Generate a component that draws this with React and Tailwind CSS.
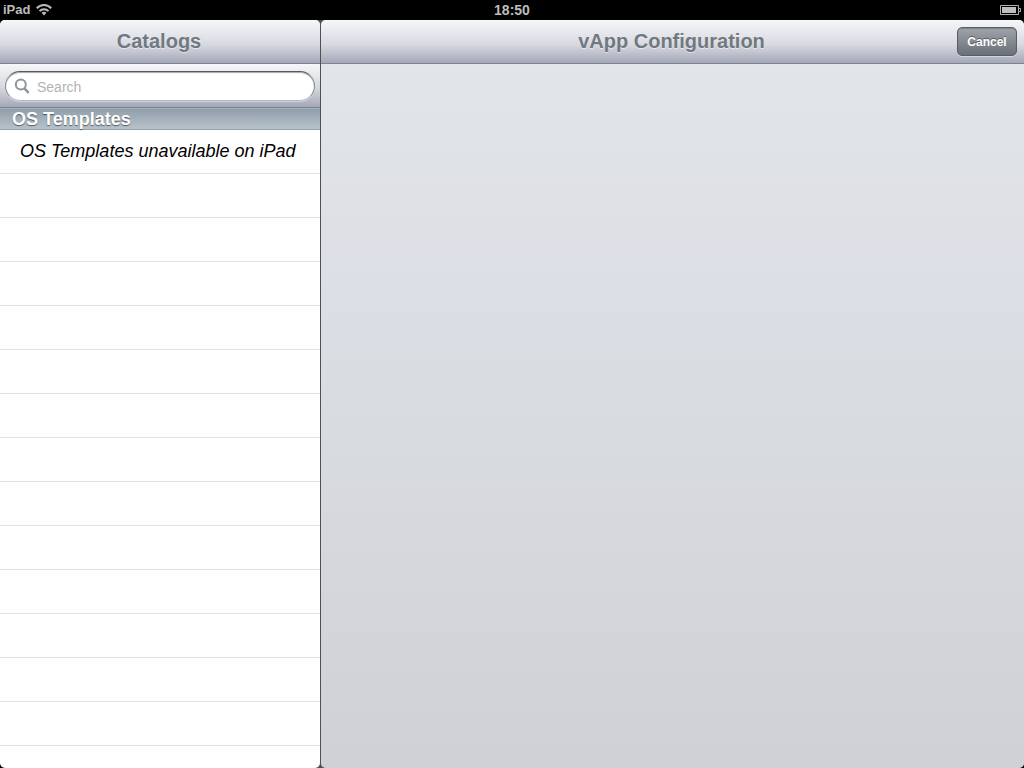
const emptyRows = Array.from({ length: 14 }, (_, index) => index);

function WifiIcon() {
  return (
    <svg viewBox="0 0 16 12" className="h-3 w-4" role="img" aria-label="Wi-Fi connected">
      <g fill="none" stroke="#bdbdbd" strokeWidth="2">
        <path d="M.8 4.3C4.8 0 11.2 0 15.2 4.3" />
        <path d="M3.5 7.1C6 4.5 10 4.5 12.5 7.1" />
      </g>
      <path d="M5.6 8.8C7 7.4 9 7.4 10.4 8.8L8 11.4Z" fill="#bdbdbd" />
    </svg>
  );
}

function BatteryIcon() {
  return (
    <svg viewBox="0 0 21 10" className="h-[10px] w-[21px]" role="img" aria-label="Battery charged">
      <path d="M.5 .5H18.5V3.5H20.5V6.5H18.5V9.5H.5Z" fill="#000" stroke="#b4b4b4" />
      <path d="M18.5 3.5V6.5" stroke="#b4b4b4" />
      <rect x="2" y="2" width="14" height="6" fill="#c0bec2" />
    </svg>
  );
}

function SearchIcon() {
  return (
    <svg viewBox="0 0 16 16" className="size-4 shrink-0" aria-hidden="true">
      <circle cx="6.8" cy="6.6" r="5" fill="none" stroke="#8a969f" strokeWidth="2" />
      <path d="M10.2 10.2L14.6 14.8" stroke="#8a969f" strokeWidth="2.4" />
    </svg>
  );
}

function TitleBar({ title, children }) {
  return (
    <header className="relative flex h-11 shrink-0 items-center justify-center border-b border-[#7e8295] bg-linear-to-b from-[#f6f7f9] via-[#dadbe2] via-55% to-[#a5a8b8] pr-0.5 pb-0.5">
      <h1 className="text-xl font-bold text-[#717980] [text-shadow:0_1px_0_rgba(255,255,255,0.5)]">{title}</h1>
      {children}
    </header>
  );
}

export default function App() {
  return (
    <div className="flex h-screen flex-col overflow-hidden bg-black font-['Liberation_Sans',Arial,sans-serif]">
      <div className="grid h-5 shrink-0 grid-cols-3 items-center px-[3px] pb-0.5 text-sm leading-5 font-bold text-[#bdbdbd]">
        <div className="flex items-center gap-1.5">
          <span className="text-[13px] leading-5">iPad</span>
          <WifiIcon />
        </div>
        <time className="text-center">18:50</time>
        <div className="flex justify-end">
          <BatteryIcon />
        </div>
      </div>

      <main className="flex min-h-0 flex-1">
        <div className="flex w-80 shrink-0 bg-linear-to-r from-black from-50% to-[#505050] to-50%">
          <section className="flex min-w-0 flex-1 flex-col overflow-hidden rounded-[5px] bg-white">
            <TitleBar title="Catalogs" />
            <div className="h-11 shrink-0 border-b border-[#7e8295] bg-linear-to-b from-[#f6f7f9] via-[#d6d8df] via-55% to-[#a5a8b8] px-[5px] pt-[7px]">
              <label className="flex h-[30px] items-center gap-[7px] rounded-full border border-t-[#55585c] border-r-[#85888e] border-b-[#b4b6bc] border-l-[#85888e] bg-white pr-3 pl-2 shadow-[inset_0_1px_1px_rgba(0,0,0,0.35),0_1px_0_rgba(255,255,255,0.4)]">
                <SearchIcon />
                <input
                  type="search"
                  aria-label="Search"
                  placeholder="Search"
                  className="min-w-0 flex-1 bg-transparent pt-0.5 text-sm text-black outline-none placeholder:text-[#b3b3b3]"
                />
              </label>
            </div>
            <h2 className="h-[22px] shrink-0 border-t border-b border-t-[#a3b0ba] border-b-[#98a2ab] bg-linear-to-b from-[#909fab] to-[#b8c2ca] px-3 text-lg leading-5 font-bold text-white [text-shadow:0_1px_1px_rgba(0,0,0,0.5)]">
              OS Templates
            </h2>
            <ul className="min-h-0 flex-1 overflow-hidden">
              <li className="flex h-11 items-center border-b border-[#e0e0e0] px-5 pb-0.5 text-lg text-black italic">
                OS Templates unavailable on iPad
              </li>
              {emptyRows.map((row) => (
                <li key={row} aria-hidden="true" className="h-11 border-b border-[#e0e0e0]" />
              ))}
            </ul>
          </section>
        </div>

        <div className="w-px shrink-0 bg-[#505050]" />

        <div className="flex min-w-0 flex-1 bg-linear-to-r from-[#505050] from-50% to-black to-50%">
          <section className="flex min-w-0 flex-1 flex-col overflow-hidden rounded-[5px] bg-[#d0d1d6]">
            <TitleBar title="vApp Configuration">
              <button
                type="button"
                className="absolute top-[7px] right-[7px] h-[29px] w-[60px] rounded-[5px] border border-[#5a5e66] bg-linear-to-b from-[#a0a4aa] to-[#6a7078] text-xs font-bold text-white shadow-[inset_0_1px_1px_rgba(0,0,0,0.2),0_1px_0_rgba(255,255,255,0.4)] [text-shadow:0_-1px_0_rgba(0,0,0,0.4)]"
              >
                Cancel
              </button>
            </TitleBar>
            <div className="flex-1 bg-[linear-gradient(to_bottom,#e2e5ea_0%,#dfe2e7_15%,#dfe0e6_22%,#dbdfe6_32%,#d9dde1_48%,#d6d8dd_65%,#d0d1d6_100%)]" />
          </section>
        </div>
      </main>
    </div>
  );
}
